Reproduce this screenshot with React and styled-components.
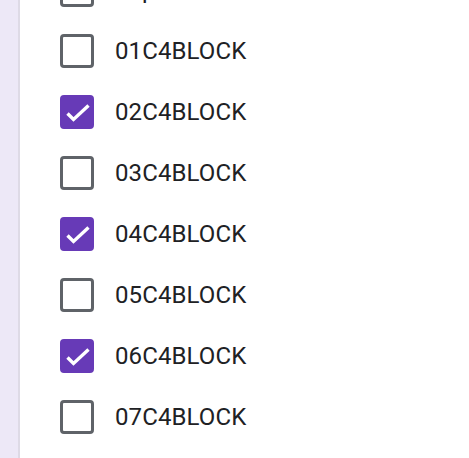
import styled, { createGlobalStyle } from "styled-components";

const GlobalStyle = createGlobalStyle`
  html, body {
    margin: 0;
    padding: 0;
    background: #ffffff;
    font-family: Roboto, "Noto Sans", sans-serif;
  }
`;

const Page = styled.div`
  display: flex;
  height: 458px;
  overflow: hidden;
`;

const Rail = styled.aside`
  flex: 0 0 18px;
  background: #ede8f7;
  border-right: 2px solid #dedae6;
`;

const Main = styled.main`
  flex: 1;
  overflow: hidden;
`;

const List = styled.ul`
  list-style: none;
  margin: -41px 0 0;
  padding: 0 0 0 40px;
`;

const Row = styled.li`
  display: flex;
  align-items: center;
  gap: 21px;
  height: 61px;
`;

const Box = styled.span`
  box-sizing: border-box;
  width: 34px;
  height: 34px;
  flex: 0 0 34px;
  border-radius: 4px;
  border: 3.5px solid ${(p) => (p.$checked ? "#673ab7" : "#5f6368")};
  background: ${(p) => (p.$checked ? "#673ab7" : "transparent")};
  display: flex;
  align-items: center;
  justify-content: center;
`;

const Label = styled.span`
  font-size: 24px;
  color: #202124;
  letter-spacing: 0.1px;
`;

const Check = () => (
  <svg width="34" height="34" viewBox="0 0 34 34" style={{ margin: "-3.5px" }}>
    <polyline
      points="7.5,18.5 13.5,24.5 28.5,10.5"
      fill="none"
      stroke="#ffffff"
      strokeWidth="3.4"
    />
  </svg>
);

const items = [
  { label: "Top", checked: false },
  { label: "01C4BLOCK", checked: false },
  { label: "02C4BLOCK", checked: true },
  { label: "03C4BLOCK", checked: false },
  { label: "04C4BLOCK", checked: true },
  { label: "05C4BLOCK", checked: false },
  { label: "06C4BLOCK", checked: true },
  { label: "07C4BLOCK", checked: false },
];

export default function App() {
  return (
    <>
      <GlobalStyle />
      <Page>
        <Rail />
        <Main>
          <List>
            {items.map((it) => (
              <Row key={it.label}>
                <Box $checked={it.checked}>{it.checked && <Check />}</Box>
                <Label>{it.label}</Label>
              </Row>
            ))}
          </List>
        </Main>
      </Page>
    </>
  );
}
